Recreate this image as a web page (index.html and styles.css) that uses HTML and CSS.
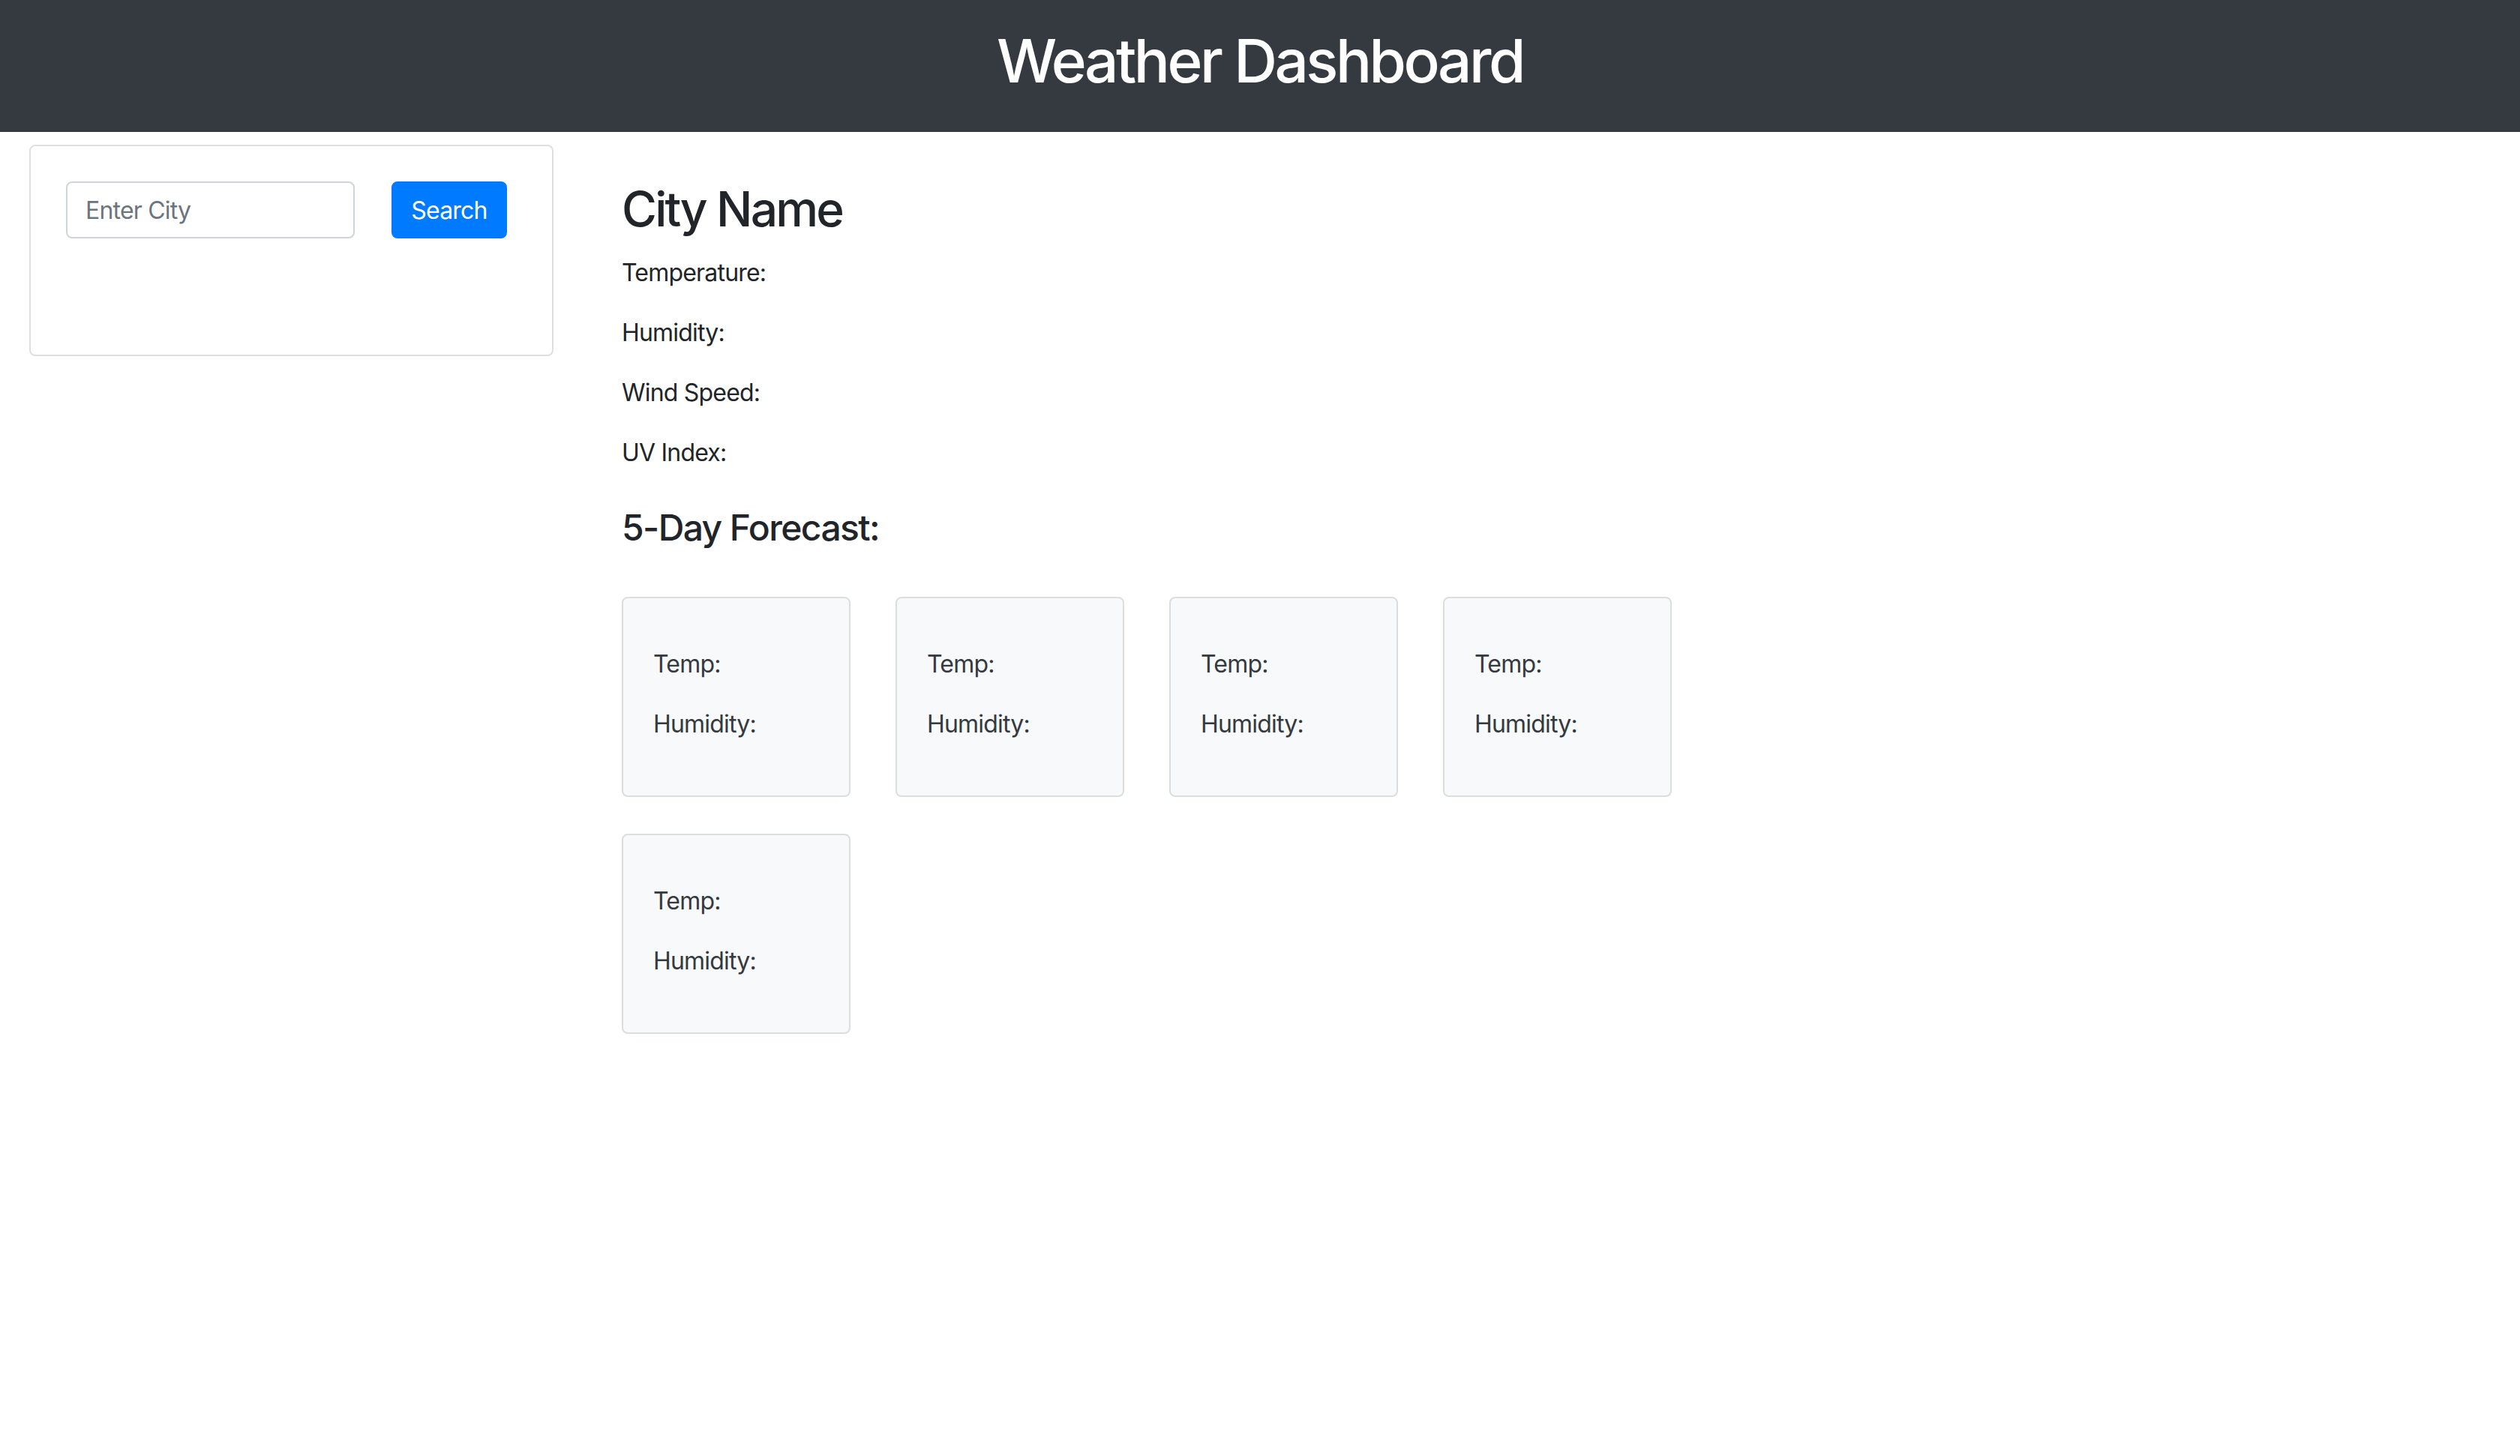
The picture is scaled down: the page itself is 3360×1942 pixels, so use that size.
FILE: index.html
```html
<!DOCTYPE html>
<html lang="en">
<head>
<meta charset="utf-8">
<title>Weather Dashboard</title>
<link rel="stylesheet" href="styles.css">
</head>
<body>
  <header class="topbar">
    <h1 class="topbar-title">Weather Dashboard</h1>
  </header>
  <div class="layout">
    <aside class="search-card">
      <form class="search-form">
        <input class="search-input" type="text" placeholder="Enter City">
        <button class="search-btn" type="button">Search</button>
      </form>
    </aside>
    <main class="current">
      <h2 class="city-name">City Name</h2>
      <p class="stat">Temperature:</p>
      <p class="stat">Humidity:</p>
      <p class="stat">Wind Speed:</p>
      <p class="stat">UV Index:</p>
      <h4 class="forecast-title">5-Day Forecast:</h4>
      <div class="forecast">
        <div class="day-card"><h5 class="day-date"></h5><p class="day-stat">Temp:</p><p class="day-stat">Humidity:</p></div>
        <div class="day-card"><h5 class="day-date"></h5><p class="day-stat">Temp:</p><p class="day-stat">Humidity:</p></div>
        <div class="day-card"><h5 class="day-date"></h5><p class="day-stat">Temp:</p><p class="day-stat">Humidity:</p></div>
        <div class="day-card"><h5 class="day-date"></h5><p class="day-stat">Temp:</p><p class="day-stat">Humidity:</p></div>
        <div class="day-card"><h5 class="day-date"></h5><p class="day-stat">Temp:</p><p class="day-stat">Humidity:</p></div>
      </div>
    </main>
  </div>
</body>
</html>
```

FILE: styles.css
```css
* { box-sizing: border-box; }

html, body {
  margin: 0;
  padding: 0;
  background: #ffffff;
}

body {
  font-family: Inter, "Noto Sans", "Liberation Sans", sans-serif;
  font-size: 32px;
  line-height: 48px;
  letter-spacing: -0.8px;
  color: #212529;
}

.topbar {
  background: #343a40;
  height: 176px;
  padding-top: 33px;
  text-align: center;
}

.topbar-title {
  margin: 0;
  font-family: Inter, "Noto Sans", "Liberation Sans", sans-serif;
  font-weight: 500;
  font-size: 80px;
  line-height: 96px;
  letter-spacing: -3.5px;
  color: #ffffff;
}

.layout {
  display: flex;
  align-items: flex-start;
  gap: 91px;
  padding: 17px 0 0 39px;
}

.search-card {
  flex: 0 0 699px;
  width: 699px;
  height: 282px;
  border: 2px solid #dfdfdf;
  border-radius: 8px;
  padding: 47px 0 0 47px;
}

.search-form {
  display: flex;
  gap: 49px;
  margin: 0;
}

.search-input {
  width: 385px;
  height: 76px;
  border: 2px solid #ced4da;
  border-radius: 8px;
  padding: 0 24px;
  font-family: Inter, "Noto Sans", sans-serif;
  font-size: 32px;
  letter-spacing: -0.8px;
  color: #495057;
  background: #ffffff;
  outline: none;
}

.search-input::placeholder {
  color: #6c757d;
  opacity: 1;
}

.search-btn {
  width: 154px;
  height: 76px;
  border: 2px solid #007bff;
  border-radius: 8px;
  background: #007bff;
  color: #ffffff;
  font-family: Inter, "Noto Sans", sans-serif;
  font-size: 32px;
  letter-spacing: -0.8px;
  padding: 0;
}

.current {
  padding-top: 48px;
  flex: 1 1 auto;
}

.city-name {
  margin: 0 0 22px;
  font-size: 64px;
  line-height: 1.2;
  font-weight: 500;
  letter-spacing: -2.8px;
}

.stat {
  margin: 0 0 32px;
}

.forecast-title {
  margin: 47.5px 0 63px;
  font-size: 48px;
  line-height: 1.2;
  font-weight: 500;
  letter-spacing: -1.6px;
}

.forecast {
  display: flex;
  flex-wrap: wrap;
  column-gap: 60.5px;
  row-gap: 49px;
  width: 1420px;
}

.day-card {
  width: 304.5px;
  height: 267px;
  background: #f8f9fa;
  border: 2px solid #dcdddd;
  border-radius: 8px;
  padding: 40px 40px 0;
  color: #343a40;
}

.day-date {
  margin: 0 0 24px;
  height: 0;
  font-size: 40px;
}

.day-stat {
  margin: 0 0 32px;
}
```
